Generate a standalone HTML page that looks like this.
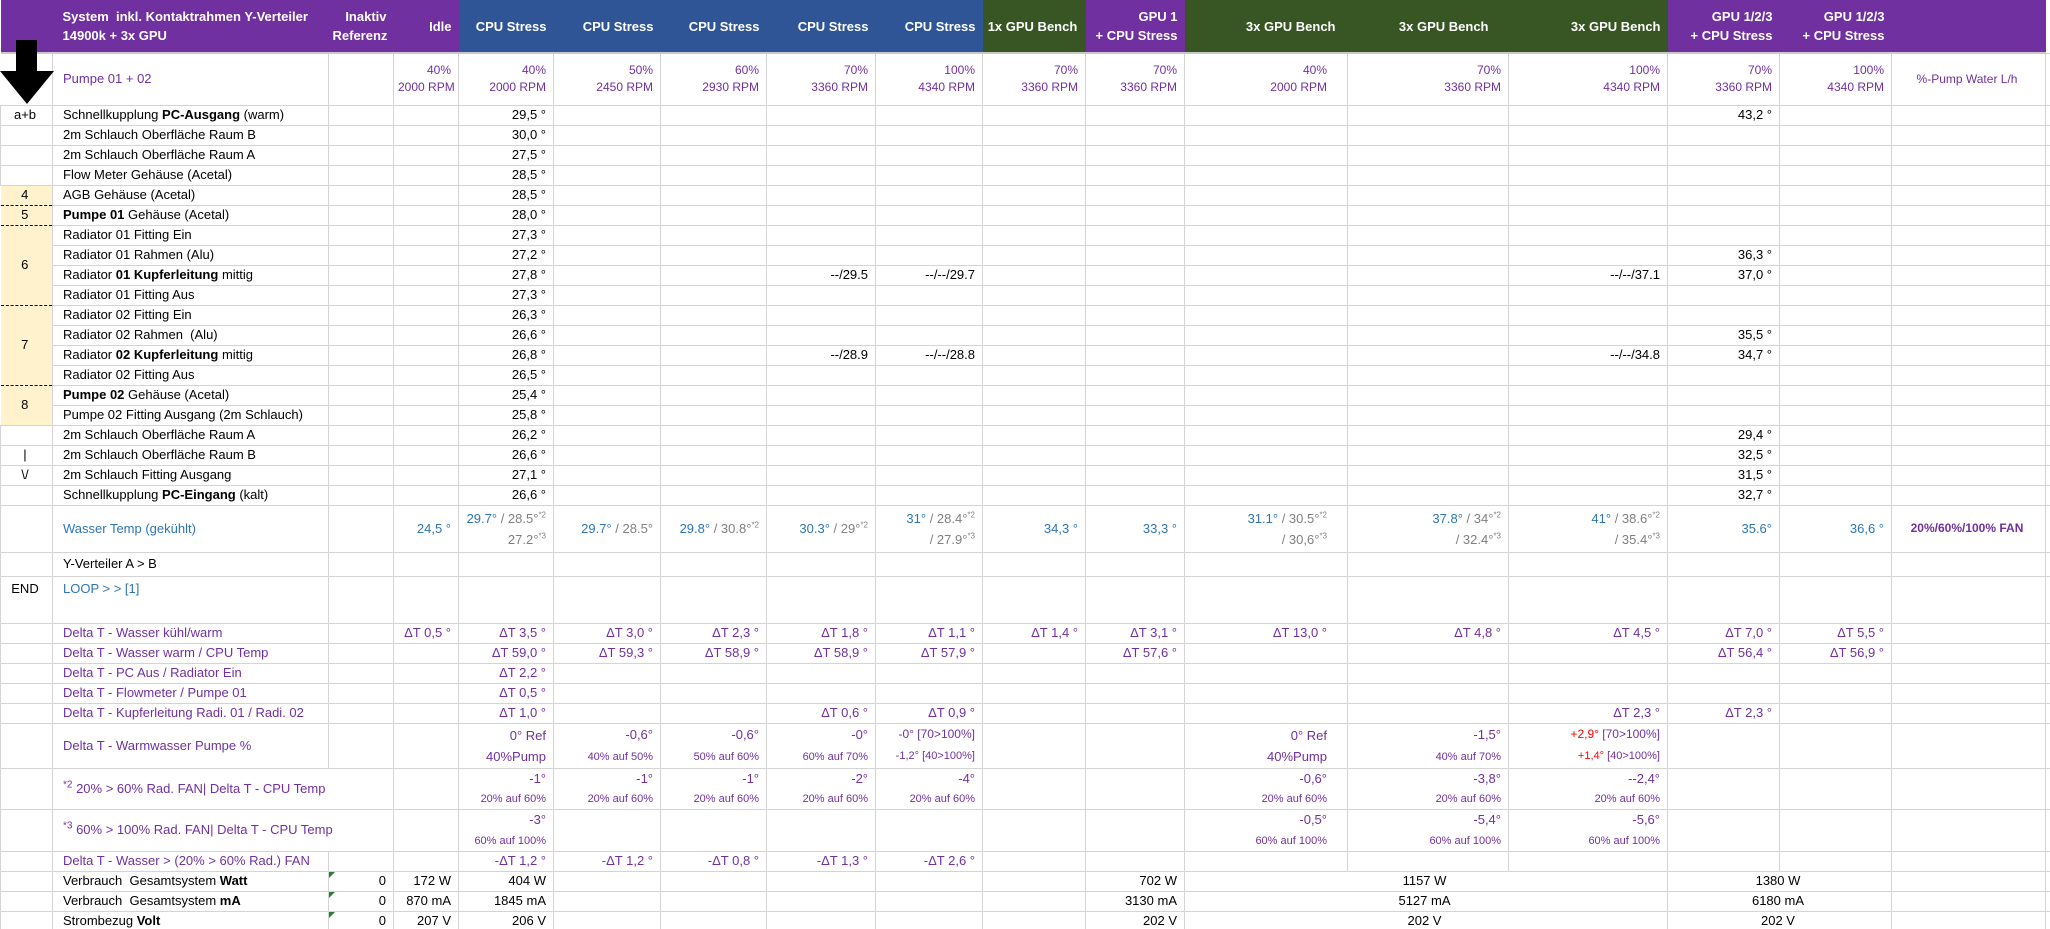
<!DOCTYPE html>
<html><head><meta charset="utf-8"><style>
html,body{margin:0;padding:0;background:#fff;width:2050px;height:929px;overflow:hidden}
table{border-collapse:collapse;table-layout:fixed;width:2050px;font-family:"Liberation Sans",Arial,sans-serif;font-size:13px;color:#000}
td{border:1px solid #d4d4d4;padding:0 7px 0 4px;text-align:right;white-space:nowrap;overflow:hidden;line-height:16px;vertical-align:middle}
tr.h td{color:#fff;font-weight:bold;border:none;border-bottom:2px solid #c8c8c8;line-height:19px;font-size:13px}
.pu{background:#7030A0}.bl{background:#2F5597}.gr{background:#375623}
.p{color:#7030A0}.b{color:#2E75B6}.g{color:#808080}.r{color:#FF0000}
.l{text-align:left;padding-left:10px}.c{text-align:center}
tr.d td{height:19px}
.cr{background:#FFF2CC;text-align:center;border-left:none}
.dt{border-top:1px dashed #000}.db{border-bottom:1px dashed #000}
.sm{font-size:11px;line-height:20px}
tr.two td{line-height:21px}
sup{font-size:8px;line-height:0}
.tri{position:relative}
.tri:before{content:"";position:absolute;left:0;top:0;border-top:6px solid #2e7d32;border-right:6px solid transparent}
</style></head><body>
<div style="position:relative">
<table>
<colgroup><col style="width:52px"><col style="width:276px"><col style="width:65px"><col style="width:65px"><col style="width:95px"><col style="width:107px"><col style="width:106px"><col style="width:109px"><col style="width:107px"><col style="width:103px"><col style="width:99px"><col style="width:163px"><col style="width:161px"><col style="width:159px"><col style="width:112px"><col style="width:112px"><col style="width:154px"><col style="width:5px"></colgroup>
<tr class="h" style="height:53px">
<td class="pu"></td><td class="pu l" style="padding-left:10px">System&nbsp; inkl. Kontaktrahmen Y-Verteiler<br>14900k + 3x GPU</td><td class="pu">Inaktiv<br>Referenz</td><td class="pu">Idle</td>
<td class="bl">CPU Stress</td><td class="bl">CPU Stress</td><td class="bl">CPU Stress</td><td class="bl">CPU Stress</td><td class="bl">CPU Stress</td>
<td class="gr c">1x GPU Bench</td><td class="pu">GPU 1<br>+ CPU Stress</td>
<td class="gr" style="padding-right:12px">3x GPU Bench</td><td class="gr" style="padding-right:20px">3x GPU Bench</td><td class="gr">3x GPU Bench</td>
<td class="pu">GPU 1/2/3<br>+ CPU Stress</td><td class="pu">GPU 1/2/3<br>+ CPU Stress</td><td class="pu"></td><td style="border:none"></td></tr>
<tr style="height:52px" class="p">
<td style="border-left:none"></td><td class="l p" style="font-size:13px">Pumpe 01 + 02</td><td></td>
<td class="p sm" style="line-height:17px;font-size:12px">40%<br>2000 RPM</td><td class="p" style="line-height:17px;font-size:12px">40%<br>2000 RPM</td><td class="p" style="line-height:17px;font-size:12px">50%<br>2450 RPM</td><td class="p" style="line-height:17px;font-size:12px">60%<br>2930 RPM</td><td class="p" style="line-height:17px;font-size:12px">70%<br>3360 RPM</td><td class="p" style="line-height:17px;font-size:12px">100%<br>4340 RPM</td><td class="p" style="line-height:17px;font-size:12px">70%<br>3360 RPM</td><td class="p" style="line-height:17px;font-size:12px">70%<br>3360 RPM</td><td class="p" style="line-height:17px;font-size:12px;padding-right:20px">40%<br>2000 RPM</td><td class="p" style="line-height:17px;font-size:12px">70%<br>3360 RPM</td><td class="p" style="line-height:17px;font-size:12px">100%<br>4340 RPM</td><td class="p" style="line-height:17px;font-size:12px">70%<br>3360 RPM</td><td class="p" style="line-height:17px;font-size:12px">100%<br>4340 RPM</td><td class="p c" style="font-size:12px">%-Pump Water L/h</td><td></td></tr>
<tr class="d"><td class="c">a+b</td><td class="l">Schnellkupplung <b>PC-Ausgang</b> (warm)</td><td></td><td></td><td>29,5 °</td><td></td><td></td><td></td><td></td><td></td><td></td><td></td><td></td><td></td><td>43,2 °</td><td></td><td></td><td></td></tr>
<tr class="d"><td></td><td class="l">2m Schlauch Oberfläche Raum B</td><td></td><td></td><td>30,0 °</td><td></td><td></td><td></td><td></td><td></td><td></td><td></td><td></td><td></td><td></td><td></td><td></td><td></td></tr>
<tr class="d"><td></td><td class="l">2m Schlauch Oberfläche Raum A</td><td></td><td></td><td>27,5 °</td><td></td><td></td><td></td><td></td><td></td><td></td><td></td><td></td><td></td><td></td><td></td><td></td><td></td></tr>
<tr class="d"><td></td><td class="l">Flow Meter Gehäuse (Acetal)</td><td></td><td></td><td>28,5 °</td><td></td><td></td><td></td><td></td><td></td><td></td><td></td><td></td><td></td><td></td><td></td><td></td><td></td></tr>
<tr class="d"><td class="cr dt db">4</td><td class="l">AGB Gehäuse (Acetal)</td><td></td><td></td><td>28,5 °</td><td></td><td></td><td></td><td></td><td></td><td></td><td></td><td></td><td></td><td></td><td></td><td></td><td></td></tr>
<tr class="d"><td class="cr dt db">5</td><td class="l"><b>Pumpe 01</b> Gehäuse (Acetal)</td><td></td><td></td><td>28,0 °</td><td></td><td></td><td></td><td></td><td></td><td></td><td></td><td></td><td></td><td></td><td></td><td></td><td></td></tr>
<tr class="d"><td class="cr dt db" rowspan="4">6</td><td class="l">Radiator 01 Fitting Ein</td><td></td><td></td><td>27,3 °</td><td></td><td></td><td></td><td></td><td></td><td></td><td></td><td></td><td></td><td></td><td></td><td></td><td></td></tr>
<tr class="d"><td class="l">Radiator 01 Rahmen (Alu)</td><td></td><td></td><td>27,2 °</td><td></td><td></td><td></td><td></td><td></td><td></td><td></td><td></td><td></td><td>36,3 °</td><td></td><td></td><td></td></tr>
<tr class="d"><td class="l">Radiator <b>01 Kupferleitung</b> mittig</td><td></td><td></td><td>27,8 °</td><td></td><td></td><td>--/29.5</td><td>--/--/29.7</td><td></td><td></td><td></td><td></td><td>--/--/37.1</td><td>37,0 °</td><td></td><td></td><td></td></tr>
<tr class="d"><td class="l">Radiator 01 Fitting Aus</td><td></td><td></td><td>27,3 °</td><td></td><td></td><td></td><td></td><td></td><td></td><td></td><td></td><td></td><td></td><td></td><td></td><td></td></tr>
<tr class="d"><td class="cr dt db" rowspan="4">7</td><td class="l">Radiator 02 Fitting Ein</td><td></td><td></td><td>26,3 °</td><td></td><td></td><td></td><td></td><td></td><td></td><td></td><td></td><td></td><td></td><td></td><td></td><td></td></tr>
<tr class="d"><td class="l">Radiator 02 Rahmen&nbsp; (Alu)</td><td></td><td></td><td>26,6 °</td><td></td><td></td><td></td><td></td><td></td><td></td><td></td><td></td><td></td><td>35,5 °</td><td></td><td></td><td></td></tr>
<tr class="d"><td class="l">Radiator <b>02 Kupferleitung</b> mittig</td><td></td><td></td><td>26,8 °</td><td></td><td></td><td>--/28.9</td><td>--/--/28.8</td><td></td><td></td><td></td><td></td><td>--/--/34.8</td><td>34,7 °</td><td></td><td></td><td></td></tr>
<tr class="d"><td class="l">Radiator 02 Fitting Aus</td><td></td><td></td><td>26,5 °</td><td></td><td></td><td></td><td></td><td></td><td></td><td></td><td></td><td></td><td></td><td></td><td></td><td></td></tr>
<tr class="d"><td class="cr dt db" rowspan="2">8</td><td class="l"><b>Pumpe 02</b> Gehäuse (Acetal)</td><td></td><td></td><td>25,4 °</td><td></td><td></td><td></td><td></td><td></td><td></td><td></td><td></td><td></td><td></td><td></td><td></td><td></td></tr>
<tr class="d"><td class="l">Pumpe 02 Fitting Ausgang (2m Schlauch)</td><td></td><td></td><td>25,8 °</td><td></td><td></td><td></td><td></td><td></td><td></td><td></td><td></td><td></td><td></td><td></td><td></td><td></td></tr>
<tr class="d"><td></td><td class="l">2m Schlauch Oberfläche Raum A</td><td></td><td></td><td>26,2 °</td><td></td><td></td><td></td><td></td><td></td><td></td><td></td><td></td><td></td><td>29,4 °</td><td></td><td></td><td></td></tr>
<tr class="d"><td class="c">|</td><td class="l">2m Schlauch Oberfläche Raum B</td><td></td><td></td><td>26,6 °</td><td></td><td></td><td></td><td></td><td></td><td></td><td></td><td></td><td></td><td>32,5 °</td><td></td><td></td><td></td></tr>
<tr class="d"><td class="c">\/</td><td class="l">2m Schlauch Fitting Ausgang</td><td></td><td></td><td>27,1 °</td><td></td><td></td><td></td><td></td><td></td><td></td><td></td><td></td><td></td><td>31,5 °</td><td></td><td></td><td></td></tr>
<tr class="d"><td></td><td class="l">Schnellkupplung <b>PC-Eingang</b> (kalt)</td><td></td><td></td><td>26,6 °</td><td></td><td></td><td></td><td></td><td></td><td></td><td></td><td></td><td></td><td>32,7 °</td><td></td><td></td><td></td></tr>
<tr style="height:47px" class="two"><td></td><td class="l b">Wasser Temp (gekühlt)</td><td></td><td class="b">24,5 °</td>
<td class="g"><span class="b">29.7°</span> / 28.5°<sup>*2</sup><br>27.2°<sup>*3</sup></td>
<td class="g"><span class="b">29.7°</span> / 28.5°</td>
<td class="g"><span class="b">29.8°</span> / 30.8°<sup>*2</sup></td>
<td class="g"><span class="b">30.3°</span> / 29°<sup>*2</sup></td>
<td class="g"><span class="b">31°</span> / 28.4°<sup>*2</sup><br>/ 27.9°<sup>*3</sup></td>
<td class="b">34,3 °</td><td class="b">33,3 °</td>
<td class="g" style="padding-right:20px"><span class="b">31.1°</span> / 30.5°<sup>*2</sup><br>/ 30,6°<sup>*3</sup></td>
<td class="g"><span class="b">37.8°</span> / 34°<sup>*2</sup><br>/ 32.4°<sup>*3</sup></td>
<td class="g"><span class="b">41°</span> / 38.6°<sup>*2</sup><br>/ 35.4°<sup>*3</sup></td>
<td class="b">35.6°</td><td class="b">36,6 °</td><td class="p c" style="font-weight:bold;font-size:12px">20%/60%/100% FAN</td><td></td></tr>
<tr style="height:24px"><td></td><td class="l">Y-Verteiler A &gt; B</td><td></td><td></td><td></td><td></td><td></td><td></td><td></td><td></td><td></td><td></td><td></td><td></td><td></td><td></td><td></td><td></td></tr>
<tr style="height:47px"><td class="c" style="vertical-align:top;padding-top:4px">END</td><td class="l b" style="vertical-align:top;padding-top:4px">LOOP &gt; &gt; [1]</td><td></td><td></td><td></td><td></td><td></td><td></td><td></td><td></td><td></td><td></td><td></td><td></td><td></td><td></td><td></td><td></td></tr>
<tr class="d p"><td></td><td class="l">Delta T - Wasser kühl/warm</td><td></td><td>ΔT 0,5 °</td><td>ΔT 3,5 °</td><td>ΔT 3,0 °</td><td>ΔT 2,3 °</td><td>ΔT 1,8 °</td><td>ΔT 1,1 °</td><td>ΔT 1,4 °</td><td>ΔT 3,1 °</td><td style="padding-right:20px">ΔT 13,0 °</td><td>ΔT 4,8 °</td><td>ΔT 4,5 °</td><td>ΔT 7,0 °</td><td>ΔT 5,5 °</td><td></td><td></td></tr>
<tr class="d p"><td></td><td class="l">Delta T - Wasser warm / CPU Temp</td><td></td><td></td><td>ΔT 59,0 °</td><td>ΔT 59,3 °</td><td>ΔT 58,9 °</td><td>ΔT 58,9 °</td><td>ΔT 57,9 °</td><td></td><td>ΔT 57,6 °</td><td></td><td></td><td></td><td>ΔT 56,4 °</td><td>ΔT 56,9 °</td><td></td><td></td></tr>
<tr class="d p"><td></td><td class="l">Delta T - PC Aus / Radiator Ein</td><td></td><td></td><td>ΔT 2,2 °</td><td></td><td></td><td></td><td></td><td></td><td></td><td></td><td></td><td></td><td></td><td></td><td></td><td></td></tr>
<tr class="d p"><td></td><td class="l">Delta T - Flowmeter / Pumpe 01</td><td></td><td></td><td>ΔT 0,5 °</td><td></td><td></td><td></td><td></td><td></td><td></td><td></td><td></td><td></td><td></td><td></td><td></td><td></td></tr>
<tr class="d p"><td></td><td class="l">Delta T - Kupferleitung Radi. 01 / Radi. 02</td><td></td><td></td><td>ΔT 1,0 °</td><td></td><td></td><td>ΔT 0,6 °</td><td>ΔT 0,9 °</td><td></td><td></td><td></td><td></td><td>ΔT 2,3 °</td><td>ΔT 2,3 °</td><td></td><td></td><td></td></tr>
<tr style="height:44px" class="p two"><td></td><td class="l">Delta T - Warmwasser Pumpe %</td><td></td><td></td>
<td>0° Ref<br>40%Pump</td><td>-0,6°<br><span style="font-size:11px">40% auf 50%</span></td><td>-0,6°<br><span style="font-size:11px">50% auf 60%</span></td><td>-0°<br><span style="font-size:11px">60% auf 70%</span></td><td style="font-size:11px"><span style="font-size:12px">-0° [70&gt;100%]</span><br>-1,2° [40&gt;100%]</td><td></td><td></td>
<td style="padding-right:20px">0° Ref<br>40%Pump</td><td>-1,5°<br><span style="font-size:11px">40% auf 70%</span></td><td style="font-size:11px"><span style="font-size:12px"><span class="r">+2,9°</span> [70&gt;100%]</span><br><span class="r">+1,4°</span> [40&gt;100%]</td><td></td><td></td><td></td><td></td></tr>
<tr style="height:38px" class="p"><td></td><td class="l" colspan="2"><sup style="font-size:10px">*2</sup> 20% &gt; 60% Rad. FAN| Delta T - CPU Temp</td><td></td>
<td style="line-height:19px">-1°<br><span style="font-size:11px">20% auf 60%</span></td><td style="line-height:19px">-1°<br><span style="font-size:11px">20% auf 60%</span></td><td style="line-height:19px">-1°<br><span style="font-size:11px">20% auf 60%</span></td><td style="line-height:19px">-2°<br><span style="font-size:11px">20% auf 60%</span></td><td style="line-height:19px">-4°<br><span style="font-size:11px">20% auf 60%</span></td><td></td><td></td>
<td style="line-height:19px;padding-right:20px">-0,6°<br><span style="font-size:11px">20% auf 60%</span></td><td style="line-height:19px">-3,8°<br><span style="font-size:11px">20% auf 60%</span></td><td style="line-height:19px">--2,4°<br><span style="font-size:11px">20% auf 60%</span></td><td></td><td></td><td></td><td></td></tr>
<tr style="height:40px" class="p"><td></td><td class="l" colspan="2"><sup style="font-size:10px">*3</sup> 60% &gt; 100% Rad. FAN| Delta T - CPU Temp</td><td></td>
<td style="line-height:20px">-3°<br><span style="font-size:11px">60% auf 100%</span></td><td></td><td></td><td></td><td></td><td></td><td></td>
<td style="line-height:20px;padding-right:20px">-0,5°<br><span style="font-size:11px">60% auf 100%</span></td><td style="line-height:20px">-5,4°<br><span style="font-size:11px">60% auf 100%</span></td><td style="line-height:20px">-5,6°<br><span style="font-size:11px">60% auf 100%</span></td><td></td><td></td><td></td><td></td></tr>
<tr class="d p"><td></td><td class="l">Delta T - Wasser &gt; (20% &gt; 60% Rad.) FAN</td><td></td><td></td><td>-ΔT 1,2 °</td><td>-ΔT 1,2 °</td><td>-ΔT 0,8 °</td><td>-ΔT 1,3 °</td><td>-ΔT 2,6 °</td><td></td><td></td><td></td><td></td><td></td><td></td><td></td><td></td><td></td></tr>
<tr class="d"><td></td><td class="l">Verbrauch&nbsp; Gesamtsystem <b>Watt</b></td><td class="tri">0</td><td>172 W</td><td>404 W</td><td></td><td></td><td></td><td></td><td></td><td>702 W</td><td class="c" colspan="3">1157 W</td><td class="c" colspan="2">1380 W</td><td></td><td></td></tr>
<tr class="d"><td></td><td class="l">Verbrauch&nbsp; Gesamtsystem <b>mA</b></td><td class="tri">0</td><td>870 mA</td><td>1845 mA</td><td></td><td></td><td></td><td></td><td></td><td>3130 mA</td><td class="c" colspan="3">5127 mA</td><td class="c" colspan="2">6180 mA</td><td></td><td></td></tr>
<tr class="d"><td></td><td class="l">Strombezug <b>Volt</b></td><td class="tri">0</td><td>207 V</td><td>206 V</td><td></td><td></td><td></td><td></td><td></td><td>202 V</td><td class="c" colspan="3">202 V</td><td class="c" colspan="2">202 V</td><td></td><td></td></tr>
</table>
<svg style="position:absolute;left:0;top:40px" width="54" height="66" viewBox="0 0 54 66"><rect x="16" y="0" width="21" height="32" fill="#000"/><polygon points="0,31 54,31 27,64" fill="#000"/></svg>
</div>
</body></html>
